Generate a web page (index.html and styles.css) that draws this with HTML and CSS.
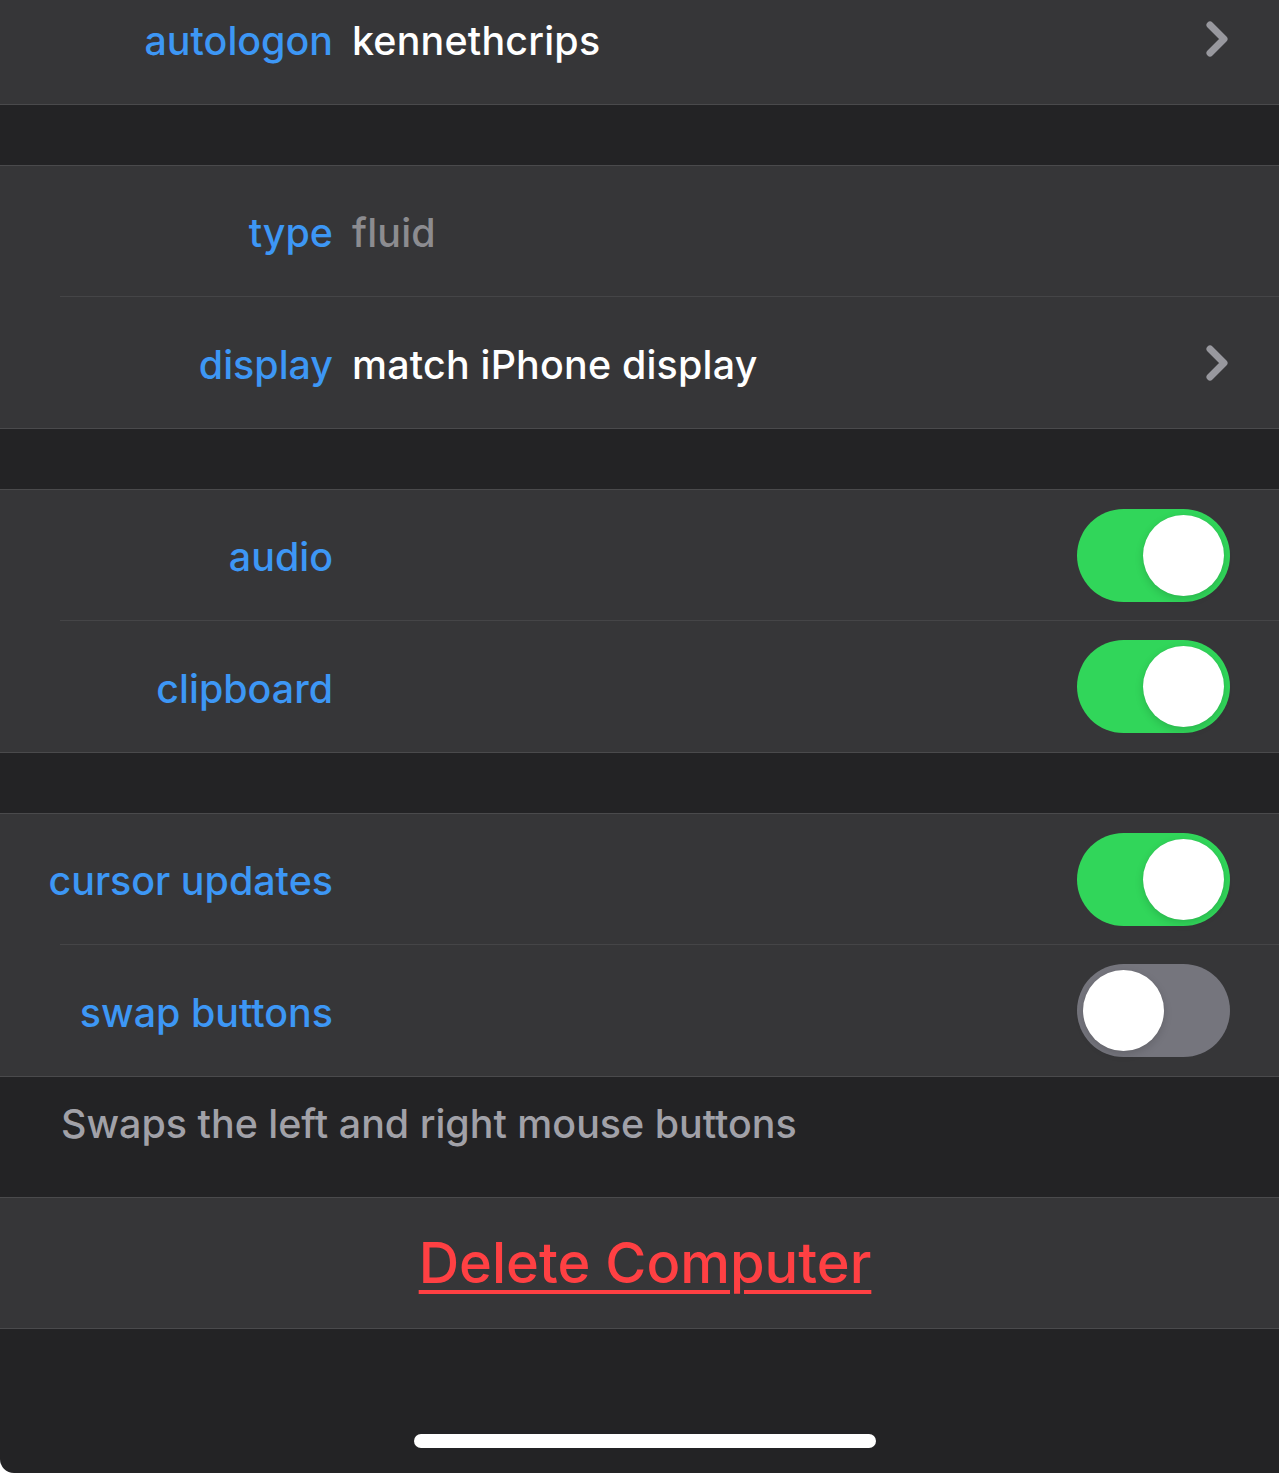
FILE: index.html
```html
<!DOCTYPE html>
<html lang="en">
<head>
<meta charset="utf-8">
<title>Computer Settings</title>
<link rel="stylesheet" href="styles.css">
</head>
<body>
<div class="screen">
  <section class="group group-first">
    <div class="row">
      <span class="label">autologon</span>
      <span class="value">kennethcrips</span>
      <svg class="chevron" viewBox="0 0 24 38" width="24" height="38"><polyline points="5,5 19,19 5,33" fill="none" stroke="#98989e" stroke-width="7" stroke-linecap="round" stroke-linejoin="round"/></svg>
    </div>
  </section>

  <section class="group">
    <div class="row">
      <span class="label">type</span>
      <span class="value muted">fluid</span>
    </div>
    <div class="row">
      <span class="label">display</span>
      <span class="value">match iPhone display</span>
      <svg class="chevron" viewBox="0 0 24 38" width="24" height="38"><polyline points="5,5 19,19 5,33" fill="none" stroke="#98989e" stroke-width="7" stroke-linecap="round" stroke-linejoin="round"/></svg>
    </div>
  </section>

  <section class="group">
    <div class="row">
      <span class="label">audio</span>
      <span class="value"></span>
      <span class="toggle on"><span class="knob"></span></span>
    </div>
    <div class="row">
      <span class="label">clipboard</span>
      <span class="value"></span>
      <span class="toggle on"><span class="knob"></span></span>
    </div>
  </section>

  <section class="group">
    <div class="row">
      <span class="label">cursor updates</span>
      <span class="value"></span>
      <span class="toggle on"><span class="knob"></span></span>
    </div>
    <div class="row">
      <span class="label">swap buttons</span>
      <span class="value"></span>
      <span class="toggle off"><span class="knob"></span></span>
    </div>
  </section>

  <p class="footer">Swaps the left and right mouse buttons</p>

  <section class="group group-action">
    <a class="delete" href="#">Delete Computer</a>
  </section>

  <div class="home-indicator"></div>
</div>
</body>
</html>
```

FILE: styles.css
```css
html, body {
  margin: 0;
  padding: 0;
  background: #ffffff;
}

.screen {
  width: 1279px;
  height: 1473px;
  overflow: hidden;
  background: #232325;
  border-bottom-left-radius: 14px;
  font-family: Inter, "Noto Sans", sans-serif;
  -webkit-font-smoothing: antialiased;
}

.group {
  background: #363638;
  border-top: 1px solid #4a4a4c;
  border-bottom: 1px solid #4a4a4c;
  margin-top: 60px;
}

.group-first {
  margin-top: -27px;
}

.row {
  display: flex;
  align-items: center;
  box-sizing: border-box;
  height: 130px;
  padding-top: 4px;
  margin-left: 60px;
  padding-right: 49px;
}

.row + .row {
  height: 132px;
  border-top: 1px solid #454547;
}

.label {
  width: 273px;
  flex: none;
  display: flex;
  justify-content: flex-end;
  white-space: nowrap;
  color: #3d97f5;
  font-size: 39.4px;
  font-weight: 500;
}

.value {
  flex: 1;
  margin-left: 19px;
  white-space: nowrap;
  color: #ffffff;
  font-size: 39.4px;
  font-weight: 500;
  letter-spacing: 0.2px;
}

.value.muted {
  color: #8c8c90;
}

.chevron {
  flex: none;
  margin-top: -4px;
  margin-right: 1px;
}

.toggle {
  flex: none;
  width: 153px;
  height: 93px;
  margin-top: -4px;
  border-radius: 47px;
  display: flex;
  align-items: center;
  padding: 0 6px;
  box-sizing: border-box;
}

.toggle.on {
  background: #31d65a;
  justify-content: flex-end;
}

.toggle.off {
  background: #75757d;
  justify-content: flex-start;
}

.knob {
  width: 81px;
  height: 81px;
  border-radius: 50%;
  background: #ffffff;
  box-shadow: 0 3px 8px rgba(0, 0, 0, 0.15), 0 0 1px rgba(0, 0, 0, 0.1);
}

.footer {
  margin: 0;
  height: 120px;
  box-sizing: border-box;
  padding: 23px 0 0 61px;
  color: #a1a1a8;
  font-size: 39.4px;
  font-weight: 500;
}

.group-action {
  margin-top: 0;
  height: 130px;
  display: flex;
  align-items: center;
  justify-content: center;
  padding-left: 11px;
}

.delete {
  color: #ff4043;
  font-size: 56px;
  font-weight: 500;
  text-decoration: underline;
  text-decoration-thickness: 4px;
  text-underline-offset: 7px;
}

.home-indicator {
  width: 462px;
  height: 14px;
  border-radius: 7px;
  background: #ffffff;
  margin: 105px 0 0 414px;
}
```
